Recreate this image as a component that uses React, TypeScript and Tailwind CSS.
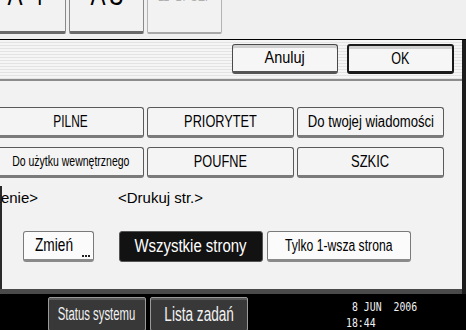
import React from "react";

const FONT = {
  fontFamily: '"Liberation Sans", Arial, sans-serif',
};

const lightBtn =
  "flex items-center justify-center bg-[#f4f4f4] border border-[#5a5a5a] border-b-[3px] border-b-[#7a7a7a] rounded-[3px] text-black whitespace-nowrap overflow-hidden";

function Dots() {
  return (
    <span className="absolute right-[3px] bottom-[2px] flex gap-[1px]">
      <span className="w-[2px] h-[2px] bg-[#222]" />
      <span className="w-[2px] h-[2px] bg-[#222]" />
      <span className="w-[2px] h-[2px] bg-[#222]" />
    </span>
  );
}

export default function App() {
  return (
    <div className="w-[466px] h-[330px] bg-black flex flex-col overflow-hidden" style={FONT}>
      {/* top tray buttons (cut off) */}
      <div className="h-[40px] shrink-0 bg-[#f0f0f0] border-b border-black overflow-hidden flex gap-[3px] -ml-[9px]">
        <div className="w-[75px] h-[60px] -mt-[26px] shrink-0 bg-[#f2f2f2] border border-[#8a8a8a] border-b-[3px] border-b-[#6a6a6a] rounded-[2px] flex items-end justify-center gap-[4px] pb-[21px] pr-[6px]">
          <span className="inline-block text-[30px] leading-none text-black scale-x-[0.75]">A</span>
          <span className="inline-block text-[30px] leading-none text-black scale-x-[0.75]">4</span>
        </div>
        <div className="w-[75px] h-[60px] -mt-[26px] shrink-0 bg-[#f2f2f2] border border-[#8a8a8a] border-b-[3px] border-b-[#6a6a6a] rounded-[2px] flex items-end justify-center gap-[0px] pb-[21px]">
          <span className="inline-block text-[30px] leading-none text-black scale-x-[0.75]">A</span>
          <span className="inline-block text-[30px] leading-none text-black scale-x-[0.85]">3</span>
        </div>
        <div className="w-[75px] h-[60px] -mt-[26px] shrink-0 bg-[#f2f2f2] border border-[#b4b4b4] border-b-[2px] border-b-[#a8a8a8] rounded-[2px] flex items-end justify-center pb-[29px]">
          <span className="inline-block text-[12px] leading-none text-[#b0b0b0] scale-x-[0.9] whitespace-nowrap">11×17 SEF</span>
        </div>
      </div>

      {/* main framed area */}
      <div className="flex flex-col border-r-4 border-r-[#1c1c1c]">
        {/* header strip */}
        <div className="h-[41px] shrink-0 border-b-2 border-b-[#8c8c8c] bg-[repeating-linear-gradient(to_bottom,#f5f5f5_0px,#f5f5f5_2px,#e3e3e3_2px,#e3e3e3_3px)] flex items-start justify-end gap-[9px] pr-[8px] pt-[4px]">
          <div className="w-[106px] h-[30px] flex items-center justify-center bg-[#f6f6f6] border border-[#4a4a4a] border-b-[3px] border-b-[#555] rounded-[3px] shadow-[inset_0_3px_0_#cfcfcf] text-black">
            <span className="inline-block text-[17px] scale-x-[0.85]">Anuluj</span>
          </div>
          <div className="w-[107px] h-[30px] flex items-center justify-center bg-[#f6f6f6] border-2 border-[#1a1a1a] border-b-[3px] rounded-[3px] shadow-[inset_0_3px_0_#cfcfcf] text-black">
            <span className="inline-block text-[17px] scale-x-[0.74]">OK</span>
          </div>
        </div>

        {/* panel */}
        <div className="h-[213px] shrink-0 bg-[#f2f2f2] border-b-[5px] border-b-[#4a4a4a] flex flex-col">
          <div className="grid grid-cols-[147px_147px_147px] gap-x-[3px] gap-y-[9px] -ml-[3px] mt-[26px]">
            <div className={`${lightBtn} h-[31px]`}>
              <span className="inline-block text-[17px] scale-x-[0.7]">PILNE</span>
            </div>
            <div className={`${lightBtn} h-[31px]`}>
              <span className="inline-block text-[17px] scale-x-[0.75]">PRIORYTET</span>
            </div>
            <div className={`${lightBtn} h-[31px]`}>
              <span className="inline-block text-[16px] scale-x-[0.82]">Do twojej wiadomości</span>
            </div>
            <div className={`${lightBtn} h-[31px]`}>
              <span className="inline-block text-[15px] scale-x-[0.7]">Do użytku wewnętrznego</span>
            </div>
            <div className={`${lightBtn} h-[31px]`}>
              <span className="inline-block text-[17px] scale-x-[0.75]">POUFNE</span>
            </div>
            <div className={`${lightBtn} h-[31px]`}>
              <span className="inline-block text-[17px] scale-x-[0.76]">SZKIC</span>
            </div>
          </div>

          <div className="flex-1 flex flex-col border-l-2 border-l-[#2a2a2a] mt-[8px]">
            <div className="flex items-center h-[24px] text-[15px] text-black">
              <div className="w-[38px] -ml-[2px] overflow-hidden flex justify-end whitespace-nowrap shrink-0">
                &lt;Położenie&gt;
              </div>
              <div className="ml-[80px] whitespace-nowrap">&lt;Drukuj str.&gt;</div>
            </div>

            <div className="flex items-start mt-[21px] ml-[21px]">
              <div className="relative w-[71px] h-[31px] flex items-center justify-center bg-[#fbfbfb] border border-[#7a7a7a] border-b-[3px] border-b-[#8a8a8a] rounded-[3px] text-black pr-[8px]">
                <span className="inline-block text-[18px] scale-x-[0.76]">Zmień</span>
                <Dots />
              </div>
              <div className="ml-[25px] w-[144px] h-[31px] flex items-center justify-center bg-[#121212] border border-[#555] rounded-[3px] text-white whitespace-nowrap">
                <span className="inline-block text-[18px] scale-x-[0.83]">Wszystkie strony</span>
              </div>
              <div className="ml-[4px] w-[144px] h-[31px] flex items-center justify-center bg-[#fbfbfb] border border-[#7a7a7a] border-b-[3px] border-b-[#8a8a8a] rounded-[3px] text-black whitespace-nowrap">
                <span className="inline-block text-[16px] scale-x-[0.76]">Tylko 1-wsza strona</span>
              </div>
            </div>
          </div>
        </div>
      </div>

      {/* bottom bar */}
      <div className="flex-1 bg-black flex items-start pt-[3px] pl-[48px]">
        <div className="w-[98px] h-[34px] flex items-center justify-center bg-[#383838] border border-[#9a9a9a] rounded-[2px] shadow-[inset_0_2px_0_#5a5a5a] text-[#f2f2f2] whitespace-nowrap">
          <span className="inline-block text-[18px] scale-x-[0.63]">Status systemu</span>
        </div>
        <div className="ml-[4px] w-[98px] h-[34px] flex items-center justify-center bg-[#383838] border border-[#9a9a9a] rounded-[2px] shadow-[inset_0_2px_0_#5a5a5a] text-[#f2f2f2] whitespace-nowrap">
          <span className="inline-block text-[20px] scale-x-[0.68]">Lista zadań</span>
        </div>
        <div
          className="ml-[98px] mt-[2px] flex flex-col text-[12px] leading-[16px] text-[#f2f2f2] whitespace-pre"
          style={{ fontFamily: '"DejaVu Sans Mono", "Liberation Mono", monospace' }}
        >
          <span className="inline-block ml-[6px] origin-left scale-x-[0.82]">8 JUN  2006</span>
          <span className="inline-block origin-left scale-x-[0.82]">18:44</span>
        </div>
      </div>
    </div>
  );
}
